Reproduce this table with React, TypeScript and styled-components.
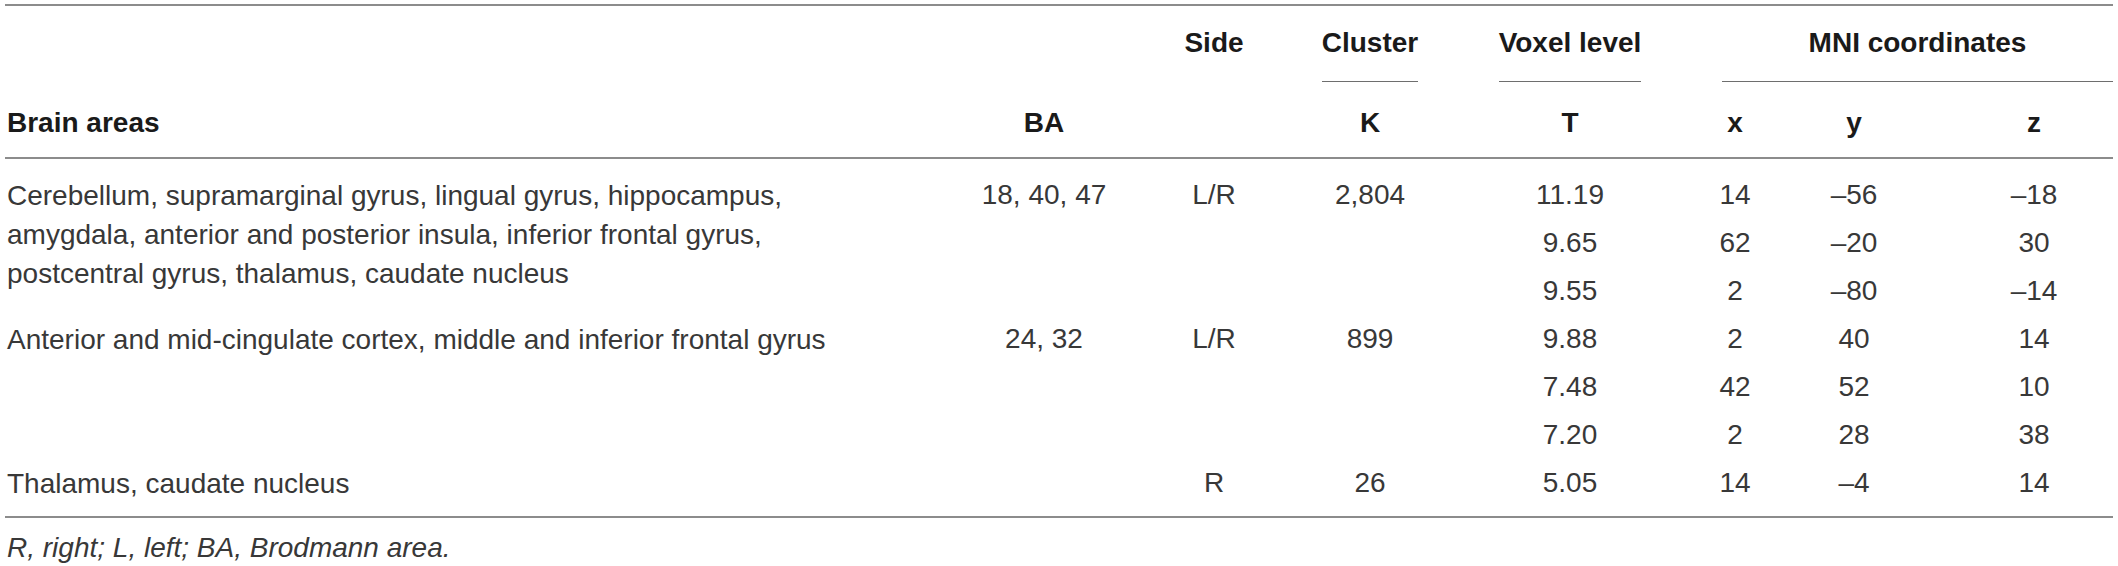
import styled, { createGlobalStyle, css } from 'styled-components';

type Group = {
  area: string[];
  ba: string;
  side: string;
  k: string;
  peaks: string[][];
};

const groups: Group[] = [
  {
    area: [
      'Cerebellum, supramarginal gyrus, lingual gyrus, hippocampus,',
      'amygdala, anterior and posterior insula, inferior frontal gyrus,',
      'postcentral gyrus, thalamus, caudate nucleus',
    ],
    ba: '18, 40, 47',
    side: 'L/R',
    k: '2,804',
    peaks: [
      ['11.19', '14', '–56', '–18'],
      ['9.65', '62', '–20', '30'],
      ['9.55', '2', '–80', '–14'],
    ],
  },
  {
    area: ['Anterior and mid-cingulate cortex, middle and inferior frontal gyrus'],
    ba: '24, 32',
    side: 'L/R',
    k: '899',
    peaks: [
      ['9.88', '2', '40', '14'],
      ['7.48', '42', '52', '10'],
      ['7.20', '2', '28', '38'],
    ],
  },
  {
    area: ['Thalamus, caudate nucleus'],
    ba: '',
    side: 'R',
    k: '26',
    peaks: [['5.05', '14', '–4', '14']],
  },
];

function App() {
  let row = 1;
  const cells: JSX.Element[] = [];

  groups.forEach((g, gi) => {
    const start = row;
    cells.push(
      <Area key={`a${gi}`} $row={start} $span={g.peaks.length}>
        {g.area.map((line, i) => (
          <span key={i}>
            {line}
            {i < g.area.length - 1 && <br />}
          </span>
        ))}
      </Area>
    );
    cells.push(<Num key={`b${gi}`} $col={2} $row={start}>{g.ba}</Num>);
    cells.push(<Num key={`s${gi}`} $col={3} $row={start}>{g.side}</Num>);
    cells.push(<Num key={`k${gi}`} $col={4} $row={start}>{g.k}</Num>);
    g.peaks.forEach((p, pi) => {
      p.forEach((v, vi) => {
        cells.push(
          <Num key={`p${gi}-${pi}-${vi}`} $col={5 + vi} $row={row} $indent={vi === 3 ? 17 : 0}>
            {v}
          </Num>
        );
      });
      row++;
    });
  });

  return (
    <>
      <GlobalStyle />
      <Page>
        <Head>
          <HeadCell $col="3" $row={1}>Side</HeadCell>
          <HeadCell $col="4" $row={1}>
            <Underlined>Cluster</Underlined>
          </HeadCell>
          <HeadCell $col="5" $row={1}>
            <Underlined>Voxel level</Underlined>
          </HeadCell>
          <SpanRule>MNI coordinates</SpanRule>

          <HeadCell $col="1" $row={2} $left>Brain areas</HeadCell>
          <HeadCell $col="2" $row={2}>BA</HeadCell>
          <HeadCell $col="4" $row={2}>K</HeadCell>
          <HeadCell $col="5" $row={2}>T</HeadCell>
          <HeadCell $col="6" $row={2}>x</HeadCell>
          <HeadCell $col="7" $row={2}>y</HeadCell>
          <HeadCell $col="8" $row={2} $indent={17}>z</HeadCell>
        </Head>
        <Body>{cells}</Body>
        <Footnote>R, right; L, left; BA, Brodmann area.</Footnote>
      </Page>
    </>
  );
}

export default App;

const GlobalStyle = createGlobalStyle`
  html, body {
    margin: 0;
    padding: 0;
    background: #ffffff;
    overflow: hidden;
  }
  body {
    font-family: "Liberation Sans", Arial, Helvetica, sans-serif;
    font-size: 28px;
    color: #383838;
  }
`;

const columns = css`
  display: grid;
  grid-template-columns: 955px 168px 172px 140px 260px 70px 168px 175px;
`;

const Page = styled.div`
  width: 2108px;
  margin-left: 5px;
  padding-top: 4px;
`;

const Head = styled.div`
  ${columns};
  grid-template-rows: 63px 48px;
  row-gap: 17px;
  padding: 13px 0 10px;
  border-top: 2px solid #8c8c8c;
  border-bottom: 2px solid #8c8c8c;
`;

const HeadCell = styled.div<{ $col: string; $row: number; $left?: boolean; $indent?: number }>`
  grid-column: ${(p) => p.$col};
  grid-row: ${(p) => p.$row};
  font-weight: 700;
  color: #1a1a1a;
  line-height: 48px;
  text-align: ${(p) => (p.$left ? 'left' : 'center')};
  padding-left: ${(p) => (p.$left ? 2 : p.$indent ?? 0)}px;
  white-space: nowrap;
`;

const Underlined = styled.span`
  display: inline-block;
  padding-bottom: 14px;
  border-bottom: 1px solid #6e6e6e;
`;

const SpanRule = styled.div`
  grid-column: 6 / 9;
  grid-row: 1;
  margin-left: 22px;
  padding-bottom: 14px;
  border-bottom: 1px solid #6e6e6e;
  font-weight: 700;
  color: #1a1a1a;
  line-height: 48px;
  text-align: center;
`;

const Body = styled.div`
  ${columns};
  grid-template-rows: repeat(7, 48px);
  padding: 12px 0 9px;
  border-bottom: 2px solid #8c8c8c;
`;

const Area = styled.div<{ $row: number; $span: number }>`
  grid-column: 1;
  grid-row: ${(p) => p.$row} / span ${(p) => p.$span};
  line-height: 39px;
  padding: 5px 0 0 2px;
  white-space: nowrap;
`;

const Num = styled.div<{ $col: number; $row: number; $indent?: number }>`
  grid-column: ${(p) => p.$col};
  grid-row: ${(p) => p.$row};
  line-height: 48px;
  text-align: center;
  padding-left: ${(p) => p.$indent ?? 0}px;
  white-space: nowrap;
`;

const Footnote = styled.div`
  margin-top: 12px;
  padding-left: 2px;
  line-height: 36px;
  font-style: italic;
`;
